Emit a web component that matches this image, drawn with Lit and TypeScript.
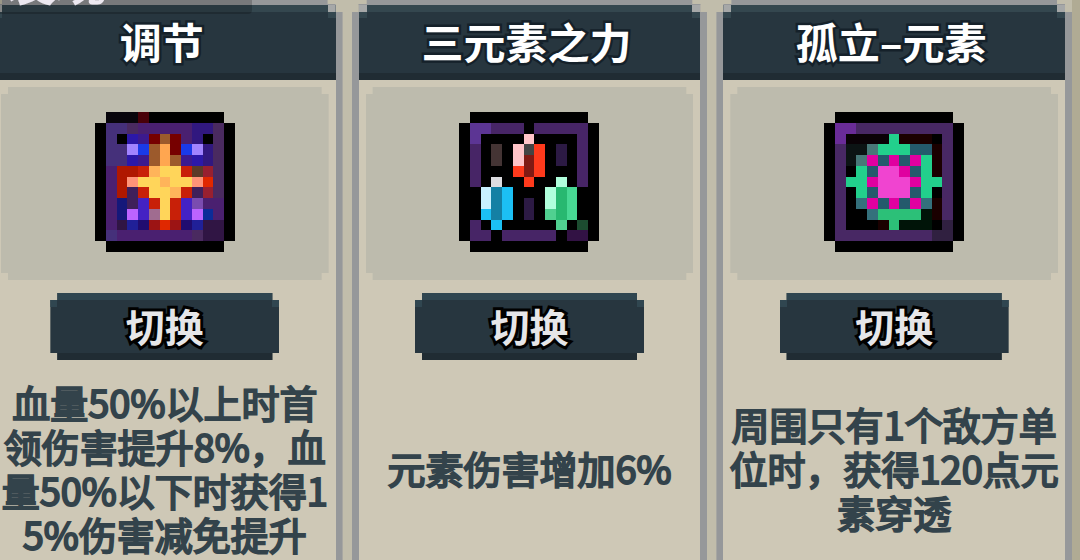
import { LitElement, html, svg, css } from "lit";
import { customElement, property } from "lit/decorators.js";

interface Talent {
  name: string;
  icon: string;
  lines: string[];
}

interface Sprite {
  palette: Record<string, string>;
  rows: string[];
}

// Each sprite is a 13 x 13 grid; a dot is a transparent cell.
const SPRITES: Record<string, Sprite> = {
  star: {
    palette: {
      k: "#000000", j: "#08050c", q: "#480008", p: "#4a2070", P: "#45307a", a: "#31187f",
      m: "#4a2a60", i: "#2c18a8", u: "#3c1a8e", d: "#760000", n: "#9c5a2c", o: "#ffa650",
      l: "#a184ff", b: "#1a3ae8", r: "#b01800", R: "#c82008", y: "#ffd55a", O: "#ffb45a",
      h: "#5c3a28", w: "#982030", s: "#ff9478", e: "#e02800", v: "#3f205a", N: "#15187a",
      V: "#4422c4", t: "#7a4cb0", c: "#bc64ff", g: "#a06c90", B: "#0c2c98", D: "#301544",
      f: "#202098", z: "#200c70", x: "#9c1414",
    },
    rows: [
      ".jjjqkkkkkkk.",
      "kPPmpppppaamk",
      "kPkiudndpakmk",
      "kPPlbnodblamk",
      "kPPiunonuiamk",
      "kprrROyyRhwmk",
      "kprsyyOyysemk",
      "kprvRyyORvwmk",
      "kpNvVRyRVtppk",
      "kpNcVgyRVcBpk",
      "kpDfzxexzfDDk",
      "kPpppppppmDDk",
      ".kkkkkkkkkkk.",
    ],
  },
  gems: {
    palette: {
      k: "#000000", L: "#5c3594", p: "#472566", i: "#ffc4c8", h: "#443434", g: "#444444",
      r: "#ff3a1c", d: "#801a14", v: "#2c1a44", w: "#dcdce0", m: "#b0ffdc", c: "#c8f0ff",
      t: "#1480a4", b: "#1cc0f4", G: "#28b870", n: "#48d894", N: "#50d090", D: "#321244",
      e: "#1c4c30",
    },
    rows: [
      ".kkkkkkkkkkk.",
      "kLLpppkpppppk",
      "kLkkkkikkkkpk",
      "kpkhkigrkvkpk",
      "kpkhkidrkvkpk",
      "kpkkkrdrkkkpk",
      "kpkwkkrkkmkpk",
      "kkctbkkkmGnkk",
      "kkctbkvkmGnkk",
      "kkbtbkvkNGnkk",
      "kpkbkkkkkNkek",
      "kppkpppppkDDk",
      ".kkkkkkkkkkk.",
    ],
  },
  ring: {
    palette: {
      k: "#000000", L: "#6a2c98", p: "#482864", a: "#0a0206", r: "#1a0000", s: "#0c1414",
      h: "#487878", t: "#245a6c", g: "#22d08c", m: "#e000a0", i: "#f044d0", T: "#34707c",
      G: "#2cc078", f: "#001408", D: "#302040",
    },
    rows: [
      ".kkkkkkkkkkk.",
      "kLLpppppppppk",
      "kLaaaagrrrkpk",
      "kpsshgggttrpk",
      "kpshmtmtmgrpk",
      "kpkgtiimtgrpk",
      "kpggmiiimggpk",
      "kpkgtiiitgkpk",
      "kpkTmtmtmTrpk",
      "kpkkTGGGGfrpk",
      "kpkkkrGfffkDk",
      "kpppppppppDDk",
      ".kkkkkkkkkkk.",
    ],
  },
};

const TALENTS: Talent[] = [
  {
    name: "调节",
    icon: "star",
    lines: ["血量50%以上时首", "领伤害提升8%，血", "量50%以下时获得1", "5%伤害减免提升"],
  },
  { name: "三元素之力", icon: "gems", lines: ["元素伤害增加6%"] },
  {
    name: "孤立–元素",
    icon: "ring",
    lines: ["周围只有1个敌方单", "位时，获得120点元", "素穿透"],
  },
];

@customElement("pixel-icon")
export class PixelIcon extends LitElement {
  @property() name = "star";

  static styles = css`
    :host {
      display: block;
      width: 140px;
      height: 140px;
    }
    .sprite {
      display: block;
      width: 100%;
      height: 100%;
    }
  `;

  render() {
    const { palette, rows } = SPRITES[this.name];
    return html`<svg class="sprite" viewBox="0 0 13 13" shape-rendering="crispEdges" aria-hidden="true">
      ${rows.map((row, y) =>
        [...row].map((cell, x) =>
          cell === "." ? null : svg`<rect x=${x} y=${y} width="1" height="1" fill=${palette[cell]}></rect>`
        )
      )}
    </svg>`;
  }
}

@customElement("talent-card")
export class TalentCard extends LitElement {
  @property({ attribute: false }) talent!: Talent;

  static styles = css`
    :host {
      display: block;
      min-width: 0;
    }
    .card {
      box-sizing: border-box;
      display: flex;
      flex-direction: column;
      align-items: stretch;
      height: 100%;
      border: 0 solid #96989a;
      border-width: 5px 7px 0;
      background: #cec8b6;
      clip-path: polygon(
        0 12px, 7px 12px, 7px 4px, 15px 4px, 15px 0,
        calc(100% - 15px) 0, calc(100% - 15px) 4px, calc(100% - 7px) 4px,
        calc(100% - 7px) 12px, 100% 12px, 100% 100%, 0 100%
      );
    }
    .title {
      margin: 0;
      height: 75px;
      padding-right: 6px;
      box-sizing: border-box;
      text-align: center;
      font-size: 42px;
      line-height: 72px;
      font-weight: 700;
      color: #ffffff;
      -webkit-text-stroke: 5px #15212a;
      paint-order: stroke fill;
      white-space: nowrap;
      background:
        linear-gradient(#a6a8a8, #a6a8a8) 0 0 / 8px 7px no-repeat,
        linear-gradient(#a6a8a8, #a6a8a8) 100% 0 / 8px 7px no-repeat,
        linear-gradient(#34474f, #34474f) 0 0 / 8px 13px no-repeat,
        linear-gradient(#34474f, #34474f) 100% 0 / 8px 13px no-repeat,
        linear-gradient(#34474f, #34474f) 0 0 / 100% 7px no-repeat,
        linear-gradient(#202c33, #202c33) 0 100% / 100% 7px no-repeat,
        #27363f;
    }
    .panel {
      display: flex;
      justify-content: center;
      margin: 7px 7px 0;
      padding: 25px 0 28px;
      background: #bdbbad;
      clip-path: polygon(
        0 7px, 7px 7px, 7px 0, calc(100% - 7px) 0, calc(100% - 7px) 7px, 100% 7px,
        100% calc(100% - 7px), calc(100% - 7px) calc(100% - 7px), calc(100% - 7px) 100%,
        7px 100%, 7px calc(100% - 7px), 0 calc(100% - 7px)
      );
    }
    .switch {
      align-self: center;
      box-sizing: border-box;
      width: 229px;
      height: 67px;
      margin: 13px 0 16px;
      padding: 0 0 4px;
      border: 0;
      font: inherit;
      font-size: 39px;
      line-height: 60px;
      font-weight: 700;
      color: #e6e6e8;
      -webkit-text-stroke: 6px #000000;
      paint-order: stroke fill;
      cursor: pointer;
      background:
        linear-gradient(#304650, #304650) 0 7px / 7px 7px no-repeat,
        linear-gradient(#304650, #304650) 100% 7px / 7px 7px no-repeat,
        linear-gradient(#304650, #304650) 0 0 / 100% 7px no-repeat,
        linear-gradient(#202c33, #202c33) 0 100% / 100% 7px no-repeat,
        #27363f;
      clip-path: polygon(
        0 7px, 7px 7px, 7px 0, calc(100% - 7px) 0, calc(100% - 7px) 7px, 100% 7px,
        100% calc(100% - 7px), calc(100% - 7px) calc(100% - 7px), calc(100% - 7px) 100%,
        7px 100%, 7px calc(100% - 7px), 0 calc(100% - 7px)
      );
    }
    .text {
      flex: 1;
      display: flex;
      flex-direction: column;
      justify-content: center;
      align-items: center;
      margin: 0;
      min-height: 176px;
      font-size: 38px;
      line-height: 44px;
      color: #33434b;
      -webkit-text-stroke: 2px #33434b;
      stroke-linejoin: round;
      white-space: nowrap;
    }
  `;

  render() {
    const { name, icon, lines } = this.talent;
    return html`
      <article class="card">
        <h2 class="title">${name}</h2>
        <div class="panel"><pixel-icon .name=${icon}></pixel-icon></div>
        <button class="switch" type="button">切换</button>
        <p class="text">${lines.map((line) => html`<span>${line}</span>`)}</p>
      </article>
    `;
  }
}

@customElement("app-root")
export class AppRoot extends LitElement {
  static styles = css`
    :host {
      display: block;
      position: relative;
      overflow: hidden;
      min-height: 100vh;
      background: #c1bdab;
      font-family: "Noto Sans CJK SC", sans-serif;
    }
    .deck {
      box-sizing: border-box;
      display: grid;
      grid-template-columns: repeat(3, minmax(0, 1fr));
      gap: 9px;
      min-height: 100vh;
      margin-left: -13px;
      border-right: 8px solid #b0ab94;
    }
    .banner {
      position: absolute;
      left: 0;
      bottom: 100%;
      width: 252px;
      height: 60px;
      margin-bottom: -14px;
      box-sizing: border-box;
      border-radius: 0 0 4px 0;
      background: rgba(0, 0, 0, 0.2);
      color: #ece8f0;
      font-size: 50px;
      line-height: 50px;
      font-style: italic;
      font-weight: 700;
      padding-left: 6px;
    }
  `;

  render() {
    return html`
      <main class="deck">
        ${TALENTS.map((talent) => html`<talent-card .talent=${talent}></talent-card>`)}
      </main>
      <div class="banner">发现</div>
    `;
  }
}
